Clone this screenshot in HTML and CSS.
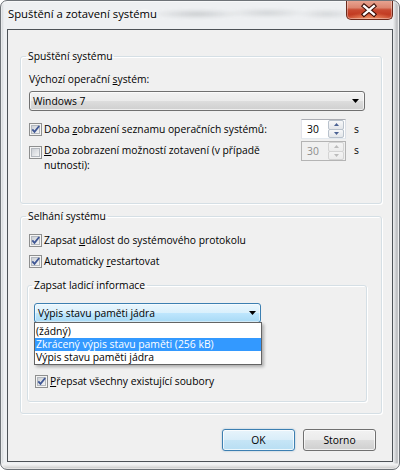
FILE: index.html
```html
<!DOCTYPE html>
<html lang="cs">
<head>
<meta charset="utf-8">
<title>Spuštění a zotavení systému</title>
<link rel="stylesheet" href="styles.css">
</head>
<body>
<div class="window">
  <div class="titlebar">
    <span class="title">Spuštění a zotavení systému</span>
    <span class="glass"></span>
    <span class="close" aria-label="Zavřít">
      <svg width="47" height="20" viewBox="0 0 47 20">
        <path d="M18.5 6 L28.5 14.5 M28.5 6 L18.5 14.5" stroke="#3a0e06" stroke-width="4.6" stroke-linecap="square"/>
        <path d="M18.5 6 L28.5 14.5 M28.5 6 L18.5 14.5" stroke="#ffffff" stroke-width="2.4" stroke-linecap="square"/>
      </svg>
    </span>
  </div>
  <div class="client">
    <fieldset class="group g1">
      <legend>Spuštění systému</legend>
      <div class="label">Výchozí operační <u>s</u>ystém:</div>
      <div class="combo">
        <span class="combo-text">Windows 7</span>
        <svg class="arrow" width="7" height="4" viewBox="0 0 7 4"><path d="M0 0h7L3.5 4z" fill="#000"/></svg>
      </div>
      <div class="row r1">
        <svg class="cb" width="13" height="13" viewBox="0 0 13 13">
          <defs><linearGradient id="cbg1" x1="0" y1="0" x2="1" y2="1"><stop offset="0" stop-color="#c9cdd3"/><stop offset="1" stop-color="#f7f7f7"/></linearGradient></defs>
          <rect x=".5" y=".5" width="12" height="12" fill="#f4f4f4" stroke="#8e8f8f"/>
          <rect x="2.5" y="2.5" width="8" height="8" fill="url(#cbg1)" stroke="#b3b8be"/>
          <path d="M3.3 6.4 L5.5 8.9 L10.2 3" fill="none" stroke="#3f5795" stroke-width="1.8"/>
        </svg>
        <span class="text">Doba <u>z</u>obrazení seznamu operačních systémů:</span>
        <span class="spin">
          <span class="val">30</span>
          <span class="btns">
            <span class="sb"><svg width="5" height="3" viewBox="0 0 5 3"><path d="M0 3h5L2.5 0z" fill="#4b6293"/></svg></span>
            <span class="sb"><svg width="5" height="3" viewBox="0 0 5 3"><path d="M0 0h5L2.5 3z" fill="#4b6293"/></svg></span>
          </span>
        </span>
        <span class="unit">s</span>
      </div>
      <div class="row r2">
        <svg class="cb" width="13" height="13" viewBox="0 0 13 13">
          <defs><linearGradient id="cbg2" x1="0" y1="0" x2="1" y2="1"><stop offset="0" stop-color="#c9cdd3"/><stop offset="1" stop-color="#f7f7f7"/></linearGradient></defs>
          <rect x=".5" y=".5" width="12" height="12" fill="#f4f4f4" stroke="#8e8f8f"/>
          <rect x="2.5" y="2.5" width="8" height="8" fill="url(#cbg2)" stroke="#b3b8be"/>
        </svg>
        <span class="text"><u>D</u>oba zobrazení možností zotavení (v případě<br>nutnosti):</span>
        <span class="spin disabled">
          <span class="val">30</span>
          <span class="btns">
            <span class="sb"><svg width="5" height="3" viewBox="0 0 5 3"><path d="M0 3h5L2.5 0z" fill="#bcbcbc"/></svg></span>
            <span class="sb"><svg width="5" height="3" viewBox="0 0 5 3"><path d="M0 0h5L2.5 3z" fill="#bcbcbc"/></svg></span>
          </span>
        </span>
        <span class="unit">s</span>
      </div>
    </fieldset>

    <fieldset class="group g2">
      <legend>Selhání systému</legend>
      <div class="check">
        <svg class="cb" width="13" height="13" viewBox="0 0 13 13">
          <defs><linearGradient id="cbg3" x1="0" y1="0" x2="1" y2="1"><stop offset="0" stop-color="#c9cdd3"/><stop offset="1" stop-color="#f7f7f7"/></linearGradient></defs>
          <rect x=".5" y=".5" width="12" height="12" fill="#f4f4f4" stroke="#8e8f8f"/>
          <rect x="2.5" y="2.5" width="8" height="8" fill="url(#cbg3)" stroke="#b3b8be"/>
          <path d="M3.3 6.4 L5.5 8.9 L10.2 3" fill="none" stroke="#3f5795" stroke-width="1.8"/>
        </svg>
        <span class="text">Zapsat <u>u</u>dálost do systémového protokolu</span>
      </div>
      <div class="check">
        <svg class="cb" width="13" height="13" viewBox="0 0 13 13">
          <defs><linearGradient id="cbg4" x1="0" y1="0" x2="1" y2="1"><stop offset="0" stop-color="#c9cdd3"/><stop offset="1" stop-color="#f7f7f7"/></linearGradient></defs>
          <rect x=".5" y=".5" width="12" height="12" fill="#f4f4f4" stroke="#8e8f8f"/>
          <rect x="2.5" y="2.5" width="8" height="8" fill="url(#cbg4)" stroke="#b3b8be"/>
          <path d="M3.3 6.4 L5.5 8.9 L10.2 3" fill="none" stroke="#3f5795" stroke-width="1.8"/>
        </svg>
        <span class="text">Automaticky <u>r</u>estartovat</span>
      </div>

      <fieldset class="group g3">
        <legend>Zapsat ladicí informace</legend>
        <div class="combo-wrap">
          <div class="combo hot">
            <span class="combo-text">Výpis stavu paměti jádra</span>
            <svg class="arrow" width="7" height="4" viewBox="0 0 7 4"><path d="M0 0h7L3.5 4z" fill="#000"/></svg>
          </div>
          <ul class="dropdown">
            <li>(žádný)</li>
            <li class="sel">Zkrácený výpis stavu paměti (256 kB)</li>
            <li>Výpis stavu paměti jádra</li>
          </ul>
        </div>
        <div class="check overwrite">
          <svg class="cb" width="13" height="13" viewBox="0 0 13 13">
            <defs><linearGradient id="cbg5" x1="0" y1="0" x2="1" y2="1"><stop offset="0" stop-color="#c9cdd3"/><stop offset="1" stop-color="#f7f7f7"/></linearGradient></defs>
            <rect x=".5" y=".5" width="12" height="12" fill="#f4f4f4" stroke="#8e8f8f"/>
            <rect x="2.5" y="2.5" width="8" height="8" fill="url(#cbg5)" stroke="#b3b8be"/>
            <path d="M3.3 6.4 L5.5 8.9 L10.2 3" fill="none" stroke="#3f5795" stroke-width="1.8"/>
          </svg>
          <span class="text"><u>P</u>řepsat všechny existující soubory</span>
        </div>
      </fieldset>
    </fieldset>

    <div class="buttons">
      <button class="btn default" type="button">OK</button>
      <button class="btn" type="button">Storno</button>
    </div>
  </div>
</div>
</body>
</html>
```

FILE: styles.css
```css
html, body {
  margin: 0;
  padding: 0;
  background: #ffffff;
}

body {
  font-family: "Open Sans", "Noto Sans", sans-serif;
  font-size: 10.3px;
  color: #000;
}

.window {
  width: 400px;
  height: 470px;
  box-sizing: border-box;
  border: 1px solid #6e7378;
  border-radius: 7px;
  background:
    linear-gradient(to bottom, rgba(255,255,255,0) 0, rgba(255,255,255,0) 462px, #f4f5f6 463px, #dcdcdc 466px, #a9a9a9 469px),
    linear-gradient(to right, #c9cdd1 0, #eef0f2 3px, #eef0f2 392px, #d6d8da 394px, #b9bbbe 396px, #e4e6e8 398px);
  box-shadow: inset 0 0 0 1px rgba(255,255,255,0.55);
  display: flex;
  flex-direction: column;
  overflow: hidden;
}

/* ---------- title bar ---------- */
.titlebar {
  height: 28px;
  display: flex;
  align-items: flex-start;
  flex-shrink: 0;
}

.title {
  margin: 5px 0 0 7px;
  font-size: 11.3px;
  line-height: 16px;
  white-space: nowrap;
  text-shadow: 0 0 6px #fff, 0 0 10px #fff, 0 0 12px #fff;
}

.glass {
  flex: 1;
  height: 24px;
  margin-top: 3px;
  background:
    radial-gradient(ellipse 45px 5px at 40px 10px, rgba(110,115,120,0.28), rgba(110,115,120,0) 100%),
    radial-gradient(ellipse 40px 5px at 110px 9px, rgba(110,115,120,0.22), rgba(110,115,120,0) 100%),
    radial-gradient(ellipse 30px 5px at 170px 10px, rgba(110,115,120,0.2), rgba(110,115,120,0) 100%);
  filter: blur(1.5px);
}

.close {
  width: 47px;
  height: 20px;
  margin: -1px 6px 0 0;
  box-sizing: border-box;
  border: 1px solid #6b2a1c;
  border-top: none;
  border-radius: 0 0 5px 5px;
  background:
    radial-gradient(ellipse 22px 7px at 50% 100%, rgba(255,170,120,0.75), rgba(255,170,120,0) 100%),
    linear-gradient(to bottom, #e9a795 0%, #dc8670 40%, #c84a31 52%, #c23b22 75%, #cf5a3d 100%);
  box-shadow: inset 0 0 0 1px rgba(255,255,255,0.35);
  display: flex;
  align-items: center;
  justify-content: center;
  flex-shrink: 0;
}

.close svg {
  display: block;
  margin-left: -1px;
}

/* ---------- client area ---------- */
.client {
  height: 433px;
  margin: 0 6px;
  box-sizing: border-box;
  border: 1px solid #4d5257;
  background: #f0f0f0;
  flex-shrink: 0;
}

.group {
  border: 1px solid #d5dfe5;
  border-radius: 3px;
  box-shadow: inset 1px 1px 0 #fff, 1px 1px 0 #fff;
  min-width: 0;
}

.group > legend {
  padding: 0 2px;
  line-height: 15px;
}

fieldset.g1 {
  margin: 19px 10px 0 12px;
  padding: 8px 16px 30px 8px;
}

fieldset.g1 > legend { margin-left: -3px; }

fieldset.g2 {
  margin: 5px 10px 0 12px;
  padding: 9px 14px 11px 6px;
}

fieldset.g2 > legend { margin-left: -1px; }

fieldset.g3 {
  margin: 9px 0 0 0;
  padding: 10px 6px 12px 6px;
}

fieldset.g3 > legend { margin-left: -2px; }

.label {
  line-height: 15px;
}

u {
  text-decoration-thickness: 1px;
  text-underline-offset: 1px;
}

/* ---------- combo boxes ---------- */
.combo {
  display: flex;
  align-items: center;
  height: 20px;
  box-sizing: border-box;
  border: 1px solid #707070;
  border-radius: 3px;
  padding: 0 5px 0 3px;
  background: linear-gradient(to bottom, #f2f2f2 0%, #ebebeb 50%, #dddddd 51%, #cfcfcf 100%);
  box-shadow: inset 0 0 0 1px rgba(255,255,255,0.65);
}

.g1 .combo {
  margin-top: 4px;
}

.combo-text {
  flex: 1;
  line-height: 18px;
  white-space: nowrap;
}

.arrow {
  display: block;
  flex-shrink: 0;
}

.combo-wrap {
  position: relative;
  width: 227px;
}

.combo.hot {
  border-color: #3c7fb1;
  padding-right: 4px;
  background: linear-gradient(to bottom, #eaf6fd 0%, #d9f0fc 50%, #bee6fd 51%, #a7d9f5 100%);
  box-shadow: inset 0 0 0 1px rgba(255,255,255,0.5);
}

.dropdown {
  position: absolute;
  top: 19px;
  left: 0;
  width: 228px;
  box-sizing: border-box;
  margin: 0;
  padding: 2px 0 0;
  list-style: none;
  background: #fff;
  border: 1px solid #646464;
  box-shadow: 2px 2px 3px rgba(0,0,0,0.28);
  z-index: 2;
}

.dropdown li {
  height: 13px;
  line-height: 13px;
  padding-left: 1px;
  font-size: 10.4px;
  white-space: nowrap;
}

.dropdown li.sel {
  background: #3399ff;
  color: #fff;
}

/* ---------- rows with checkboxes ---------- */
.cb {
  display: block;
  flex-shrink: 0;
}

.row {
  display: flex;
}

.row .text {
  flex: 1;
  margin-left: 2px;
  line-height: 15px;
  white-space: nowrap;
}

.r1 {
  margin-top: 8px;
  align-items: center;
}

.r2 {
  margin-top: 2px;
  align-items: flex-start;
}

.r2 .cb { margin-top: 5px; }
.r2 .text { margin-top: 2px; }
.r2 .unit { margin-top: 2px; }

.unit {
  width: 19px;
  box-sizing: border-box;
  padding-left: 8px;
  line-height: 15px;
  flex-shrink: 0;
}

.check {
  display: flex;
  align-items: center;
  height: 15px;
  margin-left: 2px;
}

.check + .check {
  margin-top: 6px;
}

.check .text {
  margin-left: 2px;
  line-height: 15px;
  white-space: nowrap;
}

.check.overwrite {
  margin: 51px 0 0 1px;
}

/* ---------- spin boxes ---------- */
.spin {
  width: 45px;
  height: 20px;
  box-sizing: border-box;
  display: flex;
  border: 1px solid;
  border-color: #abadb3 #dbdfe6 #e3e9ef #e2e3ea;
  background: #fff;
  flex-shrink: 0;
}

.spin .val {
  flex: 1;
  padding-left: 5px;
  line-height: 18px;
}

.spin .btns {
  display: flex;
  flex-direction: column;
  width: 17px;
  box-sizing: border-box;
  padding: 0 1px 0 0;
}

.sb {
  flex: 1;
  display: flex;
  align-items: center;
  justify-content: center;
  border: 1px solid #b9c2cc;
  border-radius: 2px;
  background: linear-gradient(to bottom, #f7f8f9, #e3e6ea);
}

.sb + .sb {
  margin-top: -1px;
}

.sb svg {
  display: block;
}

.spin.disabled {
  background: #f0f0f0;
  border-color: #b4b4b4;
}

.spin.disabled .val {
  color: #8d8d8d;
}

.spin.disabled .sb {
  border-color: #d4d4d4;
  background: linear-gradient(to bottom, #f4f4f4, #ececec);
}

/* ---------- buttons ---------- */
.buttons {
  display: flex;
  justify-content: flex-end;
  gap: 8px;
  margin-top: 15px;
  padding-right: 16px;
}

.btn {
  width: 73px;
  height: 22px;
  box-sizing: border-box;
  margin: 0;
  padding: 0;
  border: 1px solid #707070;
  border-radius: 3px;
  font-family: "Open Sans", "Noto Sans", sans-serif;
  font-size: 10.3px;
  color: #000;
  background: linear-gradient(to bottom, #f2f2f2 0%, #ebebeb 50%, #dddddd 51%, #cfcfcf 100%);
  box-shadow: inset 0 0 0 1px rgba(255,255,255,0.7);
}

.btn.default {
  border-color: #3c7fb1;
  background: linear-gradient(to bottom, #e8f4fb 0%, #d8edf9 50%, #c6e5f6 51%, #b8def3 100%);
  box-shadow: inset 0 0 0 1px rgba(255,255,255,0.75), 0 0 2px rgba(60,127,177,0.45);
}
```
